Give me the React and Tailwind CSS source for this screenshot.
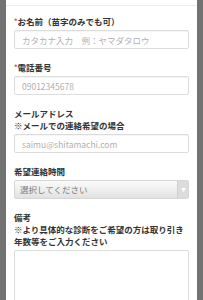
import React from 'react';

const font = { fontFamily: '"Noto Sans CJK JP", "Noto Sans", sans-serif' };

function Label({ required, children }) {
    return (
        <div className="text-[8.5px] leading-[12px] font-bold text-[#333]">
            {required && <span className="text-[#e53935] text-[7px] align-top">*</span>}
            {children}
        </div>
    );
}

function TextInput({ placeholder }) {
    return (
        <input
            type="text"
            placeholder={placeholder}
            className="mt-[3px] block w-full h-[19px] px-[7px] text-[8.5px] bg-white border border-[#dcdcdc] rounded-[2px] shadow-[inset_0_1px_1px_rgba(0,0,0,0.04)] placeholder:text-[#b0b0b0] outline-none"
            style={font}
        />
    );
}

export default function App() {
    return (
        <div className="h-screen overflow-hidden bg-[#727272] px-[6px]" style={font}>
            <div className="bg-white h-full">
                <div className="h-[6px] border-b border-[#ececec]"></div>
                <div className="px-[8px] pt-[9px]">
                    <div className="mb-[12px]">
                        <Label required>お名前（苗字のみでも可）</Label>
                        <TextInput placeholder="カタカナ入力　例：ヤマダタロウ" />
                    </div>
                    <div className="mb-[12px]">
                        <Label required>電話番号</Label>
                        <TextInput placeholder="09012345678" />
                    </div>
                    <div className="mb-[12px]">
                        <Label>
                            メールアドレス
                            <br />
                            ※メールでの連絡希望の場合
                        </Label>
                        <TextInput placeholder="saimu@shitamachi.com" />
                    </div>
                    <div className="mb-[12px]">
                        <Label>希望連絡時間</Label>
                        <div className="mt-[3px] flex h-[19px] border border-[#d6d6d6] rounded-[2px] bg-gradient-to-b from-[#fbfbfb] to-[#e2e2e2]">
                            <div className="flex-1 flex items-center pl-[5px] text-[8.5px] text-[#7a7a7a]">選択してください</div>
                            <div className="w-[11px] flex items-center justify-center border-l border-[#d0d0d0] bg-[#dcdcdc]">
                                <svg width="5" height="4" viewBox="0 0 5 4">
                                    <path d="M0 0h5L2.5 4z" fill="#fff" />
                                </svg>
                            </div>
                        </div>
                    </div>
                    <div>
                        <Label>
                            備考
                            <br />
                            ※より具体的な診断をご希望の方は取り引き
                            <br />
                            年数等をご入力ください
                        </Label>
                        <textarea
                            className="mt-[3px] block w-full h-[90px] border border-[#dcdcdc] rounded-[2px] resize-none outline-none"
                            style={font}
                        ></textarea>
                    </div>
                </div>
            </div>
        </div>
    );
}
